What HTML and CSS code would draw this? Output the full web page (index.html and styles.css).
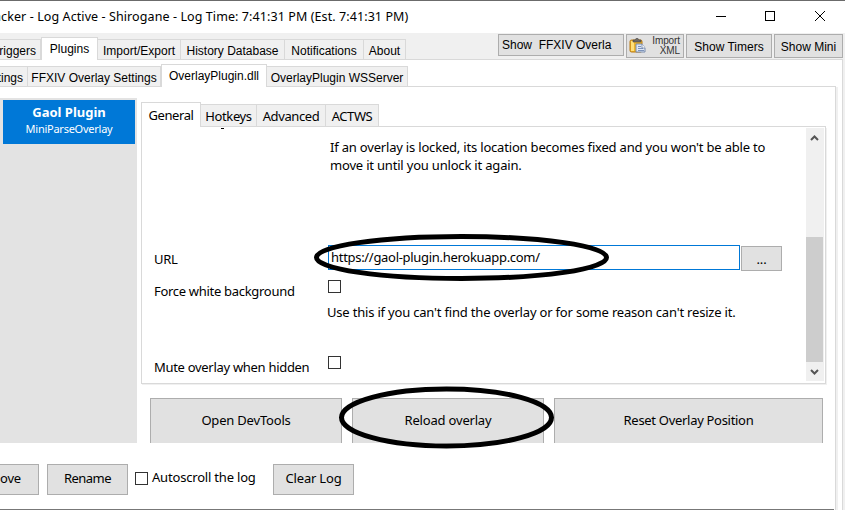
FILE: index.html
```html
<!DOCTYPE html>
<html lang="en">
<head>
<meta charset="utf-8">
<title>Log Active - Shirogane</title>
<link rel="stylesheet" href="styles.css">
</head>
<body>
<div class="window">
  <header class="titlebar">
    <span class="title">acker - Log Active - Shirogane - Log Time: 7:41:31 PM (Est. 7:41:31 PM)</span>
    <svg class="controls" width="130" height="32" viewBox="0 0 130 32" fill="none" stroke="#000" shape-rendering="crispEdges">
      <path d="M1 15.500h10"/><rect x="50.500" y="10.500" width="9" height="9"/>
      <path d="M100 10l10 10M110 10l-10 10" shape-rendering="auto"/>
    </svg>
  </header>
  <nav class="tabs main">
    <span class="tab cut w41"><b>Triggers</b></span>
    <span class="tab on w57"><b>Plugins</b></span>
    <span class="tab w83"><b>Import/Export</b></span>
    <span class="tab w104"><b>History Database</b></span>
    <span class="tab w79"><b>Notifications</b></span>
    <span class="tab w42"><b>About</b></span>
    <div class="tools">
      <button class="btn overla">Show&nbsp; FFXIV Overla</button>
      <button class="btn xml">
        <svg width="18" height="16" viewBox="0 0 18 16">
          <rect x="1" y="2" width="12" height="12" rx="1.500" fill="#edb52b" stroke="#b87912"/>
          <path d="M2 3h3v10H2z" fill="#ffe07a"/>
          <path d="M4 4V2h2l1-1.500h2L10 2h2v2z" fill="#6e6a66" stroke="#4b4844" stroke-width=".6"/>
          <path d="M7 6h6l3 4v4H7z" fill="#dce6f5" stroke="#6f83a6" stroke-width=".9"/>
          <path d="M9 8.500h3M9 10.500h5M9 12.500h6" stroke="#7d94bb"/>
          <path d="M13 6v4h3" fill="#fff" stroke="#6f83a6" stroke-width=".8"/>
        </svg>
        <span>Import<br>XML</span>
      </button>
      <button class="btn timers">Show Timers</button>
      <button class="btn mini">Show Mini</button>
    </div>
  </nav>
  <div class="page1">
    <nav class="tabs second">
      <span class="tab cut w28"><b>ttings</b></span>
      <span class="tab w133"><b>FFXIV Overlay Settings</b></span>
      <span class="tab on w106"><b>OverlayPlugin.dll</b></span>
      <span class="tab w141"><b>OverlayPlugin WSServer</b></span>
    </nav>
    <div class="page2">
      <div class="content">
        <aside class="list">
          <div class="item"><strong>Gaol Plugin</strong><span>MiniParseOverlay</span></div>
        </aside>
        <main class="detail">
          <nav class="tabs inner">
            <span class="tab on w60"><b>General</b></span>
            <span class="tab w56"><b>Hotkeys</b></span>
            <span class="tab w69"><b>Advanced</b></span>
            <span class="tab w53"><b>ACTWS</b></span>
          </nav>
          <section class="panel">
            <div class="form">
              <i class="fragment"></i>
              <p class="locked">If an overlay is locked, its location becomes fixed and you won't be able to<br>move it until you unlock it again.</p>
              <label class="url">URL</label>
              <div class="urlrow"><div class="input"><span>https://gaol-plugin.herokuapp.com/</span></div><button class="btn dots">...</button></div>
              <label class="force">Force white background</label>
              <i class="check c1"></i>
              <p class="use">Use this if you can't find the overlay or for some reason can't resize it.</p>
              <label class="mute">Mute overlay when hidden</label>
              <i class="check c2"></i>
            </div>
            <div class="scroll">
              <svg width="17" height="18" viewBox="0 0 17 18"><path d="M5 12l3.500-3.500L12 12" fill="none" stroke="#555" stroke-width="2"/></svg>
              <div class="thumb"></div>
              <svg width="17" height="18" viewBox="0 0 17 18"><path d="M5 8l3.500 3.500L12 8" fill="none" stroke="#555" stroke-width="2"/></svg>
            </div>
          </section>
          <div class="actions">
            <button class="btn a1">Open DevTools</button>
            <button class="btn a2">Reload overlay</button>
            <button class="btn a3">Reset Overlay Position</button>
          </div>
        </main>
      </div>
      <footer class="bottom">
        <button class="btn b1">ove</button>
        <button class="btn b2">Rename</button>
        <i class="check c3"></i>
        <span class="auto">Autoscroll the log</span>
        <button class="btn b3">Clear Log</button>
      </footer>
    </div>
  </div>
  <svg class="marks" width="845" height="510" viewBox="0 0 845 510" fill="none" stroke="#000" stroke-width="5">
    <ellipse cx="461.500" cy="257.500" rx="145" ry="21"/>
    <ellipse cx="446.500" cy="417.500" rx="105" ry="28.500"/>
  </svg>
</div>
</body>
</html>
```
FILE: styles.css
```css
* { box-sizing: border-box; }
body { margin: 0; background: #fff; color: #000; font: 13px/18px "Noto Sans", sans-serif; letter-spacing: -0.19px; }
b, i { font-weight: normal; font-style: normal; }
p { margin: 0; }
b, span, label, button, p { white-space: nowrap; }
.window { position: relative; width: 845px; height: 510px; overflow: hidden; display: flex; flex-direction: column; }
.titlebar { height: 33px; flex: none; border-top: 1px solid #6b6b6b; display: flex; }
.title { width: 721px; margin-left: -6px; line-height: 32px; font-size: 12.5px; letter-spacing: 0.09px; }
.tabs { display: flex; align-items: flex-end; flex: none; border-bottom: 1px solid #d9d9d9; }
.tab { height: 20px; flex: none; background: #f0f0f0; border: 1px solid #d9d9d9; border-width: 1px 1px 0 0; line-height: 22px; display: flex; justify-content: center; }
.tab.cut { justify-content: flex-end; padding-right: 4px; overflow: hidden; }
.tab.on { height: 23px; margin-bottom: -1px; background: #fff; border-left-width: 1px; }
.main { height: 27px; width: 843px; background: #f0f0f0; box-shadow: 2px 0 #f0f0f0; }
.main, .second { font-family: "Liberation Sans", sans-serif; font-size: 12px; letter-spacing: 0; }
.w41 { width: 41px; } .w57 { width: 57px; } .w83 { width: 83px; } .w104 { width: 104px; }
.w79 { width: 79px; } .w42 { width: 42px; } .w28 { width: 28px; } .w133 { width: 133px; }
.w106 { width: 106px; } .w141 { width: 141px; } .w60 { width: 60px; } .w56 { width: 56px; }
.w69 { width: 69px; } .w53 { width: 53px; }
.btn { border: 1px solid #adadad; border-radius: 0; background: #e1e1e1; color: #000; font: inherit; letter-spacing: inherit; padding: 0 0 2px; margin: 0; flex: none; }
.tools { display: flex; gap: 2px; margin-left: auto; height: 25px; align-items: flex-start; }
.tools .btn { height: 24px; padding: 1px 0 0; }
.tools .overla { width: 126px; height: 22px; text-align: left; padding: 0 0 0 3px; line-height: 20px; }
.tools .xml { width: 58px; display: flex; align-items: center; justify-content: space-between; padding: 0 3px 0 2px; font-size: 10px; line-height: 10px; text-align: right; color: #333; letter-spacing: -0.1px; }
.tools .timers { width: 86px; }
.tools .mini { width: 69px; }
.page1 { width: 843px; flex: 1; border-right: 1px solid #d9d9d9; box-shadow: 2px 0 #f0f0f0; display: flex; flex-direction: column; }
.second { height: 27px; width: 836px; }
.page2 { width: 836px; flex: 1; border-right: 1px solid #d9d9d9; box-shadow: 2px 0 #f0f0f0; display: flex; flex-direction: column; }
.content { display: flex; height: 356px; padding-top: 11px; overflow: hidden; }
.list { width: 137px; background: #e3e3e3; padding: 2px 2px 0 3px; }
.item { height: 44px; background: #0078d7; color: #fff; display: flex; flex-direction: column; align-items: center; padding-top: 3px; }
.item strong { line-height: 19px; font-size: 13px; letter-spacing: 0; }
.item span { font-size: 11px; line-height: 14px; letter-spacing: -0.25px; }
.detail { margin-left: 4px; width: 685px; }
.inner { height: 29px; letter-spacing: -0.4px; }
.inner .tab { height: 22px; line-height: 23px; }
.inner .tab.on { height: 25px; line-height: 24px; }
.panel { height: 257px; border: 1px solid #d9d9d9; border-top: 0; box-shadow: 1px 1px #f0f0f0; display: flex; padding-top: 1px; }
.form { width: 664px; display: grid; grid-template-columns: 173px 1fr; grid-template-rows: 110px 38px 20px 38px 36px; align-items: start; padding-left: 12px; }
.form > * { grid-column: 1; }
.form label { letter-spacing: -0.3px; }
.fragment { grid-row: 1; width: 3px; height: 1px; background: #000; margin-left: 67px; }
.locked { grid-area: 1 / 2; margin: 10px 0 0 3px; }
.url { grid-row: 2; margin-top: 12px; }
.urlrow { grid-area: 2 / 2; display: flex; gap: 1px; margin: 7px 0 0 1px; }
.input { width: 412px; height: 25px; border: 1px solid #0078d7; padding-left: 2px; line-height: 23px; letter-spacing: -0.3px; }
.dots { width: 41px; height: 25px; margin-top: 1px; padding: 0; }
.force { grid-row: 3; margin-top: 6px; }
.check { width: 13px; height: 13px; border: 1px solid #333; background: #fff; flex: none; }
.c1 { grid-area: 3 / 2; margin: 4px 0 0 1px; }
.use { grid-area: 4 / 2; margin-top: 7px; }
.mute { grid-row: 5; margin-top: 24px; }
.c2 { grid-area: 5 / 2; margin: 22px 0 0 1px; }
.scroll { width: 18px; height: 253px; background: #f0f0f0; display: flex; flex-direction: column; }
.thumb { width: 17px; height: 125px; margin-top: 91px; background: #cdcdcd; }
.scroll svg { display: block; flex: none; }
.actions { display: flex; gap: 10px; margin: 14px 0 0 9px; }
.actions .btn { height: 46px; border-bottom: 0; padding-bottom: 3px; }
.a1, .a2 { width: 192px; } .a3 { width: 269px; letter-spacing: -0.3px; }
.bottom { height: 67px; width: 834px; padding-top: 21px; border-bottom: 1px solid #777; display: flex; align-items: flex-start; }
.bottom .btn { height: 31px; padding-bottom: 3px; }
.b1 { width: 39px; border-left: 0; text-align: left; }
.b2 { width: 81px; margin-left: 8px; }
.c3 { margin: 8px 4px 0 7px; }
.auto { width: 121px; margin-top: 4px; }
.bottom .b2 { letter-spacing: -0.5px; }
.b3 { width: 81px; }
.marks { position: absolute; inset: 0; }
```
